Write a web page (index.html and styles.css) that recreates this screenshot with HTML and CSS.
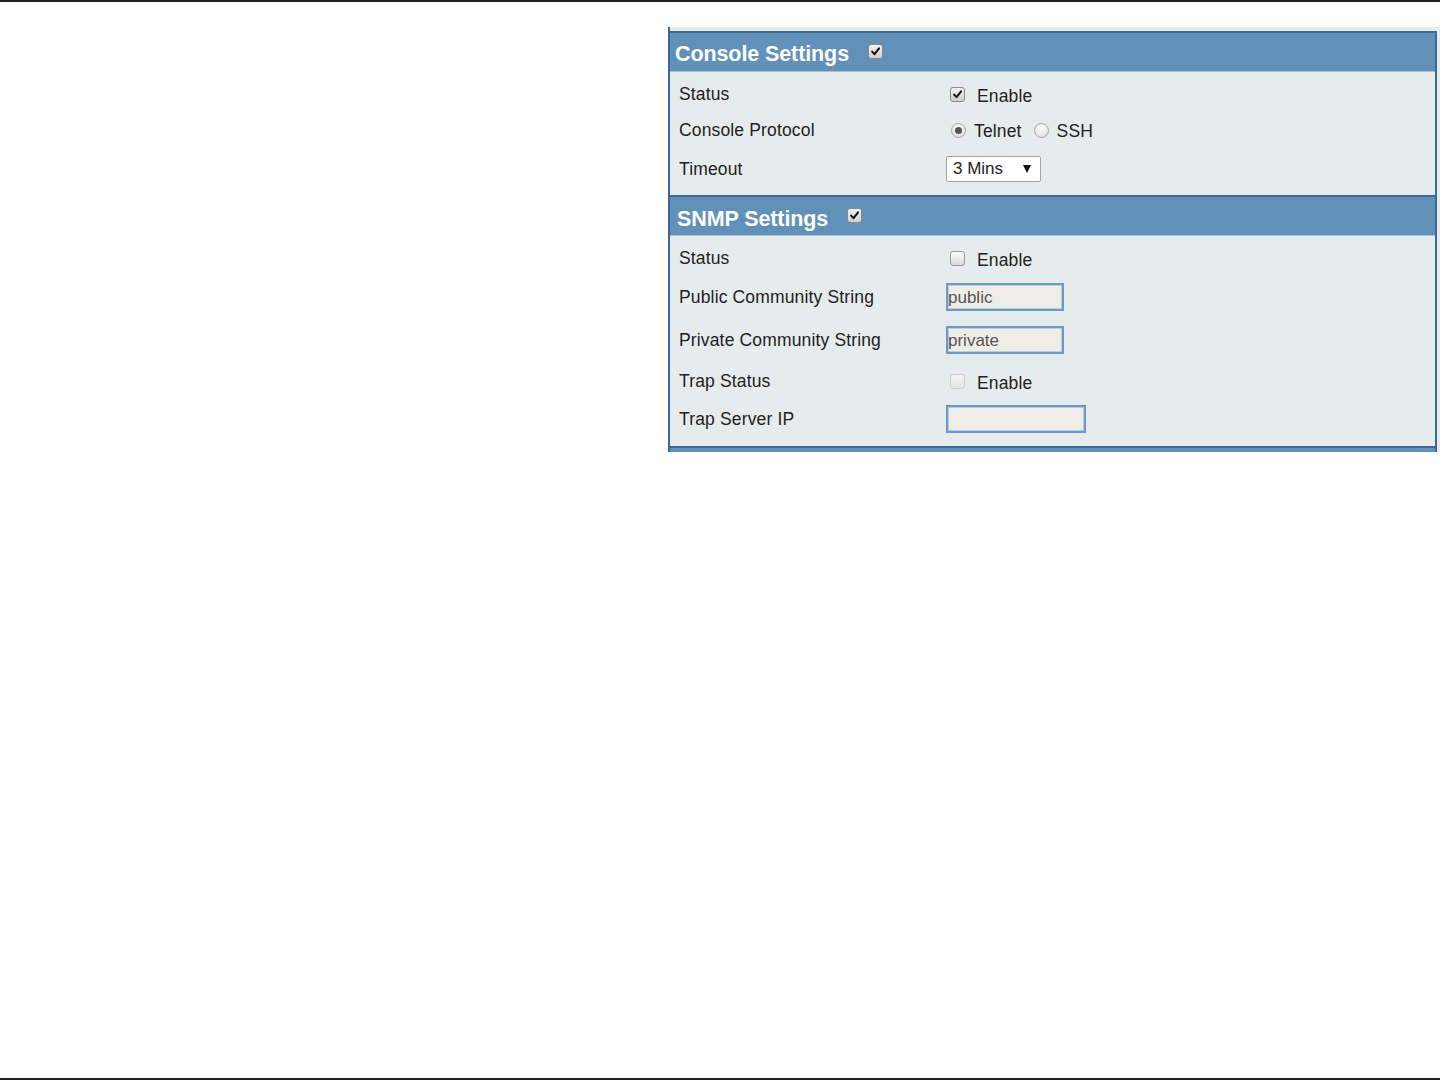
FILE: index.html
```html
<!DOCTYPE html>
<html lang="en">
<head>
<meta charset="utf-8">
<title>Console and SNMP Settings</title>
<link rel="stylesheet" href="styles.css">
</head>
<body>
<div class="page">
  <div class="rule rule-top"></div>
  <div class="panel">
    <div class="inner">
      <section class="group">
        <div class="group-head">
          <span class="group-title">Console Settings</span>
          <span class="cb cb-head checked"><svg viewBox="0 0 15 15"><path d="M3.6 7.6 L6.4 10.6 L11.6 3.8" /></svg></span>
        </div>
        <div class="group-body">
          <div class="row h36">
            <div class="label">Status</div>
            <div class="ctrl">
              <span class="cb checked"><svg viewBox="0 0 15 15"><path d="M3.6 7.6 L6.4 10.6 L11.6 3.8" /></svg></span>
              <span class="opt-text">Enable</span>
            </div>
          </div>
          <div class="row h36">
            <div class="label">Console Protocol</div>
            <div class="ctrl">
              <span class="radio checked"></span>
              <span class="opt-text radio-text">Telnet</span>
              <span class="radio second"></span>
              <span class="opt-text radio-text">SSH</span>
            </div>
          </div>
          <div class="row h42">
            <div class="label">Timeout</div>
            <div class="ctrl">
              <div class="select"><span>3 Mins</span><span class="arrow"></span></div>
            </div>
          </div>
        </div>
      </section>
      <section class="group">
        <div class="group-head">
          <span class="group-title snmp">SNMP Settings</span>
          <span class="cb cb-head checked"><svg viewBox="0 0 15 15"><path d="M3.6 7.6 L6.4 10.6 L11.6 3.8" /></svg></span>
        </div>
        <div class="group-body body-snmp">
          <div class="row h36">
            <div class="label">Status</div>
            <div class="ctrl">
              <span class="cb"></span>
              <span class="opt-text">Enable</span>
            </div>
          </div>
          <div class="row h42">
            <div class="label">Public Community String</div>
            <div class="ctrl"><div class="field">public</div></div>
          </div>
          <div class="row h44">
            <div class="label">Private Community String</div>
            <div class="ctrl"><div class="field">private</div></div>
          </div>
          <div class="row h38">
            <div class="label">Trap Status</div>
            <div class="ctrl">
              <span class="cb disabled"></span>
              <span class="opt-text">Enable</span>
            </div>
          </div>
          <div class="row h38">
            <div class="label">Trap Server IP</div>
            <div class="ctrl"><div class="field wide"></div></div>
          </div>
        </div>
      </section>
      <div class="panel-foot"></div>
    </div>
  </div>
  <div class="spacer"></div>
  <div class="rule rule-bottom"></div>
</div>
</body>
</html>
```

FILE: styles.css
```css
html, body {
  margin: 0;
  padding: 0;
  background: #ffffff;
}

body {
  font-family: "Liberation Sans", Arial, sans-serif;
  color: #222222;
}

.page {
  display: flex;
  flex-direction: column;
  height: 1081px;
  overflow: hidden;
}

.rule {
  height: 2px;
  background: #231f20;
  flex: none;
}

.rule-bottom {
  margin-bottom: 1px;
}

.spacer {
  flex: 1;
}

.panel {
  margin-top: 25px;
  margin-left: 668px;
  width: 772px;
  box-sizing: border-box;
  border-left: 2px solid #3b6896;
  background: #e6ecec;
  padding: 4px 3px 0 0;
  flex: none;
}

.inner {
  border-right: 2px solid #3b6896;
}

.group-head {
  border-top: 2px solid #3b6896;
  border-bottom: 1px solid #a9c0d4;
  background: #6190b9;
  height: 38px;
  display: flex;
  align-items: center;
  padding-left: 5px;
}

.group-title {
  color: #ffffff;
  font-weight: bold;
  font-size: 21.5px;
  letter-spacing: -0.1px;
  margin-right: 19px;
  position: relative;
  top: 2px;
}

.group-title.snmp {
  margin-left: 2px;
  top: 3px;
}

.group-body {
  padding: 4px 0 5px 9px;
}

.group-body.body-snmp {
  padding-bottom: 8px;
}

.row {
  display: grid;
  grid-template-columns: 267px 1fr;
  align-items: center;
}

.h36 { height: 36px; }
.h38 { height: 38px; }
.h42 { height: 42px; }
.h44 { height: 44px; }

.label {
  font-size: 17.5px;
  letter-spacing: 0.15px;
  color: #222222;
}

.ctrl {
  display: flex;
  align-items: center;
}

.opt-text {
  font-size: 17.5px;
  letter-spacing: 0.15px;
  color: #222222;
  margin-left: 12px;
  position: relative;
  top: 2px;
}

.radio-text {
  margin-left: 8px;
  top: 1px;
}

/* checkboxes */
.cb {
  width: 15px;
  height: 15px;
  box-sizing: border-box;
  border: 1px solid #9a9a9a;
  border-radius: 3px;
  background: linear-gradient(#ffffff, #d8d8d8);
  margin-left: 4px;
  display: inline-flex;
  flex: none;
}

.cb.checked {
  background: linear-gradient(#f2f2f2, #cfcfcf);
  border-color: #8a8a8a;
}

.cb.disabled {
  border-color: #cccccc;
  background: linear-gradient(#f4f4f4, #e4e4e4);
}

.cb svg {
  width: 13px;
  height: 13px;
}

.cb svg path {
  fill: none;
  stroke: #111111;
  stroke-width: 2.3;
  stroke-linecap: round;
  stroke-linejoin: round;
}

.cb-head {
  margin-left: 0;
  position: relative;
  top: -1px;
  border-color: #7e8b96;
  background: linear-gradient(#f4f4f4, #d4d4d4);
}

/* radios */
.radio {
  width: 15px;
  height: 15px;
  box-sizing: border-box;
  border: 1px solid #a5a5a5;
  border-radius: 50%;
  background: radial-gradient(circle at 50% 35%, #ffffff, #d9d9d9);
  margin-left: 5px;
  flex: none;
  display: inline-flex;
  align-items: center;
  justify-content: center;
}

.radio.checked::after {
  content: "";
  width: 7px;
  height: 7px;
  border-radius: 50%;
  background: #555555;
}

.radio.second {
  margin-left: 12px;
}

/* select */
.select {
  width: 95px;
  height: 26px;
  box-sizing: border-box;
  border: 1px solid #a3a3a3;
  border-radius: 2px;
  background: #ffffff;
  display: flex;
  align-items: center;
  justify-content: space-between;
  padding: 0 9px 0 6px;
  font-size: 17px;
  color: #222222;
}

.select .arrow {
  width: 0;
  height: 0;
  border-left: 4.5px solid transparent;
  border-right: 4.5px solid transparent;
  border-top: 8px solid #111111;
}

/* text fields */
.field {
  width: 118px;
  height: 28px;
  box-sizing: border-box;
  border: 2px solid #6f98c8;
  box-shadow: inset 0 0 0 1px #b9cde2;
  background: #eeeee6;
  font-size: 17px;
  color: #555555;
  display: flex;
  align-items: center;
  padding-left: 0;
  padding-top: 1px;
}

.field.wide {
  width: 140px;
}

.panel-foot {
  border-top: 2px solid #3b6896;
  height: 4px;
  background: #6190b9;
}
```
